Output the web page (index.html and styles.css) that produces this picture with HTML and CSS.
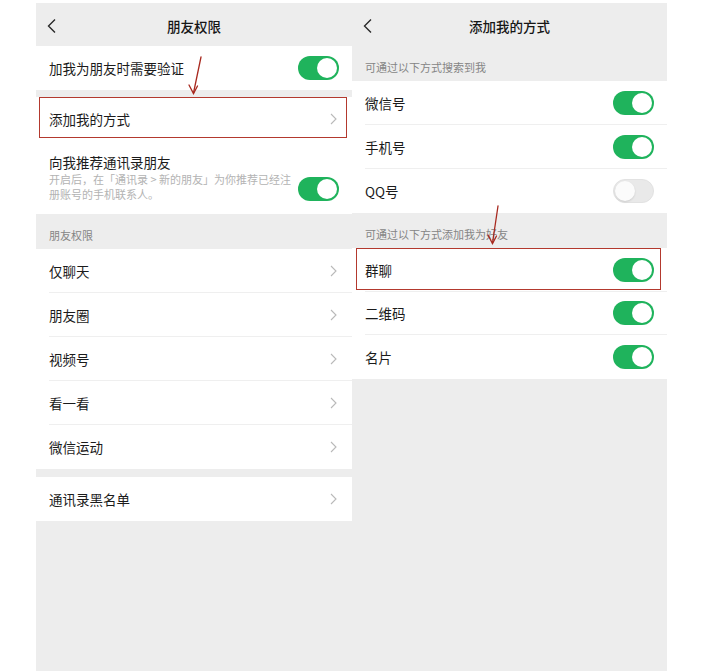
FILE: index.html
```html
<!DOCTYPE html>
<html lang="zh-CN">
<head>
<meta charset="utf-8">
<title>朋友权限</title>
<link rel="stylesheet" href="styles.css">
</head>
<body>
<div class="page">
  <section class="panel panel-left">
    <header class="navbar">
      <svg class="back" width="10" height="16" viewBox="0 0 10 16"><polyline points="8,1.5 1.5,8 8,14.5" fill="none" stroke="#2a2a2a" stroke-width="1.4"/></svg>
      <span class="nav-title">朋友权限</span>
      <span></span>
    </header>

    <div class="group">
      <div class="row">
        <span class="label">加我为朋友时需要验证</span>
        <span class="toggle on"></span>
      </div>
    </div>

    <div class="group gap">
      <div class="row hl-row">
        <span class="label">添加我的方式</span>
        <svg class="chev" width="7" height="12" viewBox="0 0 7 12"><polyline points="1,1 6,6 1,11" fill="none" stroke="#b9b9b9" stroke-width="1.1"/></svg>
        <span class="hl hl-left"></span>
      </div>
      <div class="row tall">
        <div class="text-col">
          <span class="label">向我推荐通讯录朋友</span>
          <span class="sub">开启后，在「通讯录 &gt; 新的朋友」为你推荐已经注<br>册账号的手机联系人。</span>
        </div>
        <span class="toggle on"></span>
      </div>
    </div>

    <div class="section">朋友权限</div>
    <div class="group">
      <div class="row sep"><span class="label">仅聊天</span><svg class="chev" width="7" height="12" viewBox="0 0 7 12"><polyline points="1,1 6,6 1,11" fill="none" stroke="#b9b9b9" stroke-width="1.1"/></svg></div>
      <div class="row sep"><span class="label">朋友圈</span><svg class="chev" width="7" height="12" viewBox="0 0 7 12"><polyline points="1,1 6,6 1,11" fill="none" stroke="#b9b9b9" stroke-width="1.1"/></svg></div>
      <div class="row sep"><span class="label">视频号</span><svg class="chev" width="7" height="12" viewBox="0 0 7 12"><polyline points="1,1 6,6 1,11" fill="none" stroke="#b9b9b9" stroke-width="1.1"/></svg></div>
      <div class="row sep"><span class="label">看一看</span><svg class="chev" width="7" height="12" viewBox="0 0 7 12"><polyline points="1,1 6,6 1,11" fill="none" stroke="#b9b9b9" stroke-width="1.1"/></svg></div>
      <div class="row"><span class="label">微信运动</span><svg class="chev" width="7" height="12" viewBox="0 0 7 12"><polyline points="1,1 6,6 1,11" fill="none" stroke="#b9b9b9" stroke-width="1.1"/></svg></div>
    </div>

    <div class="group gap-lg">
      <div class="row"><span class="label">通讯录黑名单</span><svg class="chev" width="7" height="12" viewBox="0 0 7 12"><polyline points="1,1 6,6 1,11" fill="none" stroke="#b9b9b9" stroke-width="1.1"/></svg></div>
    </div>
  </section>

  <section class="panel panel-right">
    <header class="navbar">
      <svg class="back" width="10" height="16" viewBox="0 0 10 16"><polyline points="8,1.5 1.5,8 8,14.5" fill="none" stroke="#2a2a2a" stroke-width="1.4"/></svg>
      <span class="nav-title">添加我的方式</span>
      <span></span>
    </header>

    <div class="section">可通过以下方式搜索到我</div>
    <div class="group">
      <div class="row sep"><span class="label">微信号</span><span class="toggle on"></span></div>
      <div class="row sep"><span class="label">手机号</span><span class="toggle on"></span></div>
      <div class="row"><span class="label">QQ号</span><span class="toggle off"></span></div>
    </div>

    <div class="section">可通过以下方式添加我为好友</div>
    <div class="group compact">
      <div class="row sep hl-row"><span class="label">群聊</span><span class="toggle on"></span><span class="hl hl-right"></span></div>
      <div class="row sep"><span class="label">二维码</span><span class="toggle on"></span></div>
      <div class="row"><span class="label">名片</span><span class="toggle on"></span></div>
    </div>
  </section>

  <svg class="arrows" width="710" height="671" viewBox="0 0 710 671">
    <g fill="none" stroke="#a8291f" stroke-width="1.3" stroke-linecap="round">
      <line x1="201" y1="57" x2="193.5" y2="93"/>
      <polyline points="189,85 193.5,93.5 197.5,86"/>
      <line x1="498" y1="206" x2="492.5" y2="243"/>
      <polyline points="488,235 492.5,243.5 496.5,236"/>
    </g>
  </svg>
</div>
</body>
</html>
```

FILE: styles.css
```css
html, body {
  margin: 0;
  padding: 0;
  background: #ffffff;
}

body {
  font-family: "Noto Sans CJK SC", "Noto Sans", sans-serif;
  color: #1b1b1b;
}

.page {
  position: relative;
  display: flex;
  width: 710px;
  height: 671px;
  box-sizing: border-box;
  padding: 3px 0 0 36px;
  overflow: hidden;
}

.panel {
  background: #ededed;
  display: flex;
  flex-direction: column;
}

.panel-left { width: 316px; }
.panel-right { width: 315px; }

.navbar {
  height: 43px;
  display: grid;
  grid-template-columns: 40px 1fr 40px;
  align-items: center;
  padding-top: 2px;
  box-sizing: border-box;
}

.back {
  margin-left: 11px;
}

.nav-title {
  text-align: center;
  font-size: 13.5px;
  font-weight: 500;
  color: #161616;
}

.group {
  background: #ffffff;
}

.group.gap { margin-top: 7px; }
.group.gap-lg { margin-top: 8px; }

.row {
  position: relative;
  height: 44px;
  display: flex;
  align-items: center;
  justify-content: space-between;
  padding: 0 13px;
  box-sizing: border-box;
}

.group.compact .row {
  height: 43.5px;
}

.row.sep::after {
  content: "";
  position: absolute;
  left: 13px;
  right: 0;
  bottom: 0;
  height: 1px;
  background: #efefef;
}

.label {
  font-size: 13.5px;
  line-height: 20px;
  color: #1b1b1b;
}

.row.tall {
  height: 73px;
  align-items: flex-start;
  padding-top: 11px;
}

.row.tall .toggle {
  margin-top: 25px;
}

.text-col {
  display: flex;
  flex-direction: column;
  min-width: 0;
}

.sub {
  font-size: 11px;
  line-height: 15px;
  color: #b3b3b3;
  white-space: nowrap;
}

.chev {
  margin-right: 2px;
}

.section {
  height: 35px;
  box-sizing: border-box;
  padding: 13px 13px 0;
  font-size: 11px;
  line-height: 16px;
  color: #858585;
}

.toggle {
  position: relative;
  flex: none;
  width: 41px;
  height: 24px;
  border-radius: 12px;
  box-sizing: border-box;
}

.toggle.on {
  background: #1fb35c;
}

.toggle.on::after {
  content: "";
  position: absolute;
  top: 2px;
  right: 2px;
  width: 20px;
  height: 20px;
  border-radius: 50%;
  background: #ffffff;
}

.toggle.off {
  background: #e9e9e9;
  border: 1px solid #e2e2e2;
}

.toggle.off::after {
  content: "";
  position: absolute;
  top: 1px;
  left: 1px;
  width: 20px;
  height: 20px;
  border-radius: 50%;
  background: #fbfbfb;
  box-shadow: 0 1px 2px rgba(0, 0, 0, 0.12);
}

.hl {
  position: absolute;
  top: 0;
  border: 1.5px solid #b3392e;
  box-sizing: border-box;
  pointer-events: none;
}

.hl-left {
  left: 3px;
  right: 5px;
  bottom: 3px;
}

.hl-right {
  left: 4px;
  right: 6px;
  bottom: 2px;
}

.arrows {
  position: absolute;
  top: 0;
  left: 0;
  pointer-events: none;
}
```
